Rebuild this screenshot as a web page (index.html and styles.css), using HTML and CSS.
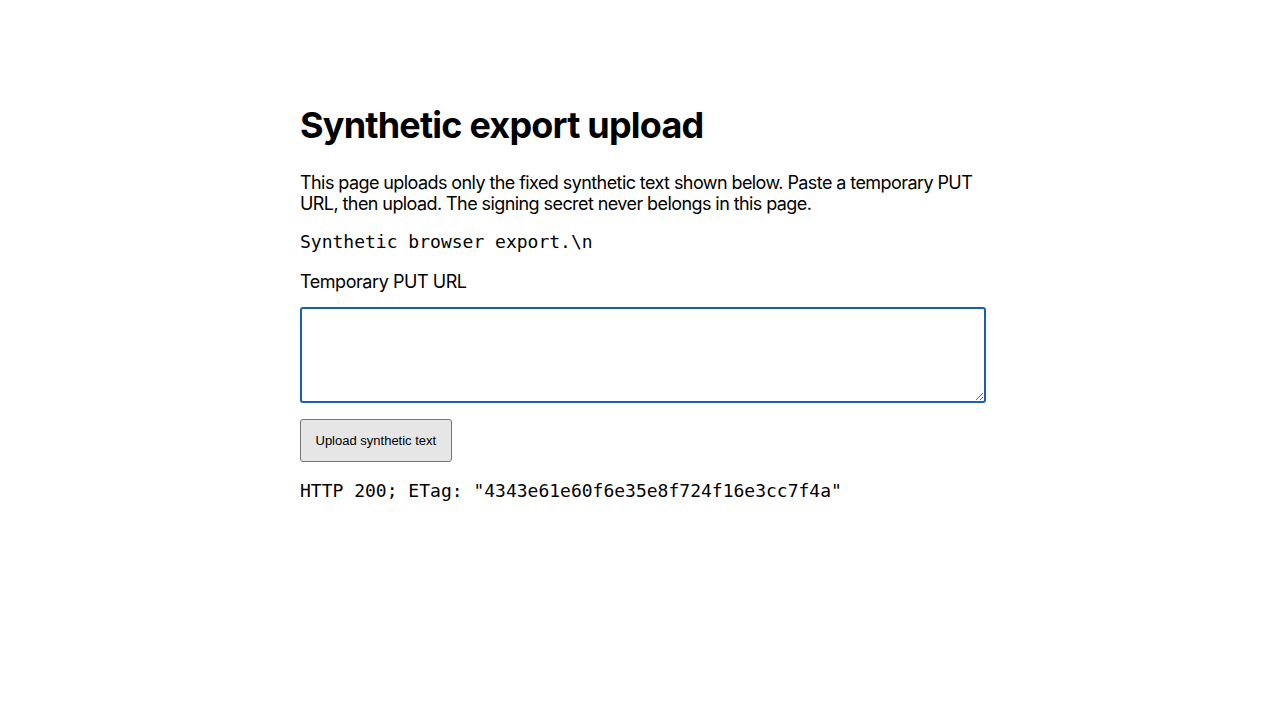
FILE: index.html
```html
<!DOCTYPE html>
<html lang="en">
<head>
<meta charset="utf-8">
<title>Synthetic export upload</title>
<link rel="stylesheet" href="styles.css">
</head>
<body>
<main class="page">
  <h1 class="title">Synthetic export upload</h1>
  <p class="intro">This page uploads only the fixed synthetic text shown below. Paste a temporary PUT URL, then upload. The signing secret never belongs in this page.</p>
  <pre class="sample">Synthetic browser export.\n</pre>
  <label class="label" for="url">Temporary PUT URL</label>
  <textarea id="url" class="url-input"></textarea>
  <button class="upload-btn" type="button">Upload synthetic text</button>
  <pre class="status">HTTP 200; ETag: "4343e61e60f6e35e8f724f16e3cc7f4a"</pre>
</main>
</body>
</html>
```
FILE: styles.css
```css
html, body {
  margin: 0;
  padding: 0;
  background: #ffffff;
}

body {
  font-family: Inter, "Noto Sans", "Liberation Sans", sans-serif;
  font-size: 18px;
  line-height: 1.15;
  color: #000;
}

.page {
  max-width: 680px;
  margin: 0 auto;
  padding-top: 104px;
}

.title {
  font-size: 36px;
  font-weight: 700;
  line-height: 1.2;
  margin: 0 0 25px;
  letter-spacing: -0.8px;
}

.intro {
  margin: 0 0 17px;
  line-height: 21px;
  letter-spacing: -0.58px;
}

.sample,
.status {
  font-family: "DejaVu Sans Mono", monospace;
  font-size: 18px;
  line-height: 22px;
  margin: 0 0 18px;
}

.label {
  display: block;
  margin: 0 0 14px;
  line-height: 22px;
  letter-spacing: -0.45px;
}

.url-input {
  display: block;
  box-sizing: border-box;
  width: calc(100% + 6px);
  height: 96px;
  margin: 0 0 16px;
  border: 2px solid #1a5fb4;
  border-radius: 3px;
  outline: none;
  resize: vertical;
  font-family: "DejaVu Sans Mono", monospace;
  font-size: 13px;
}

.upload-btn {
  display: block;
  height: 43px;
  padding: 0 14.5px;
  margin: 0 0 18px;
  font-family: "Liberation Sans", Arial, sans-serif;
  font-size: 13px;
  color: #000;
  background: #e6e6e6;
  border: 1px solid #767676;
  border-radius: 3px;
}
```
